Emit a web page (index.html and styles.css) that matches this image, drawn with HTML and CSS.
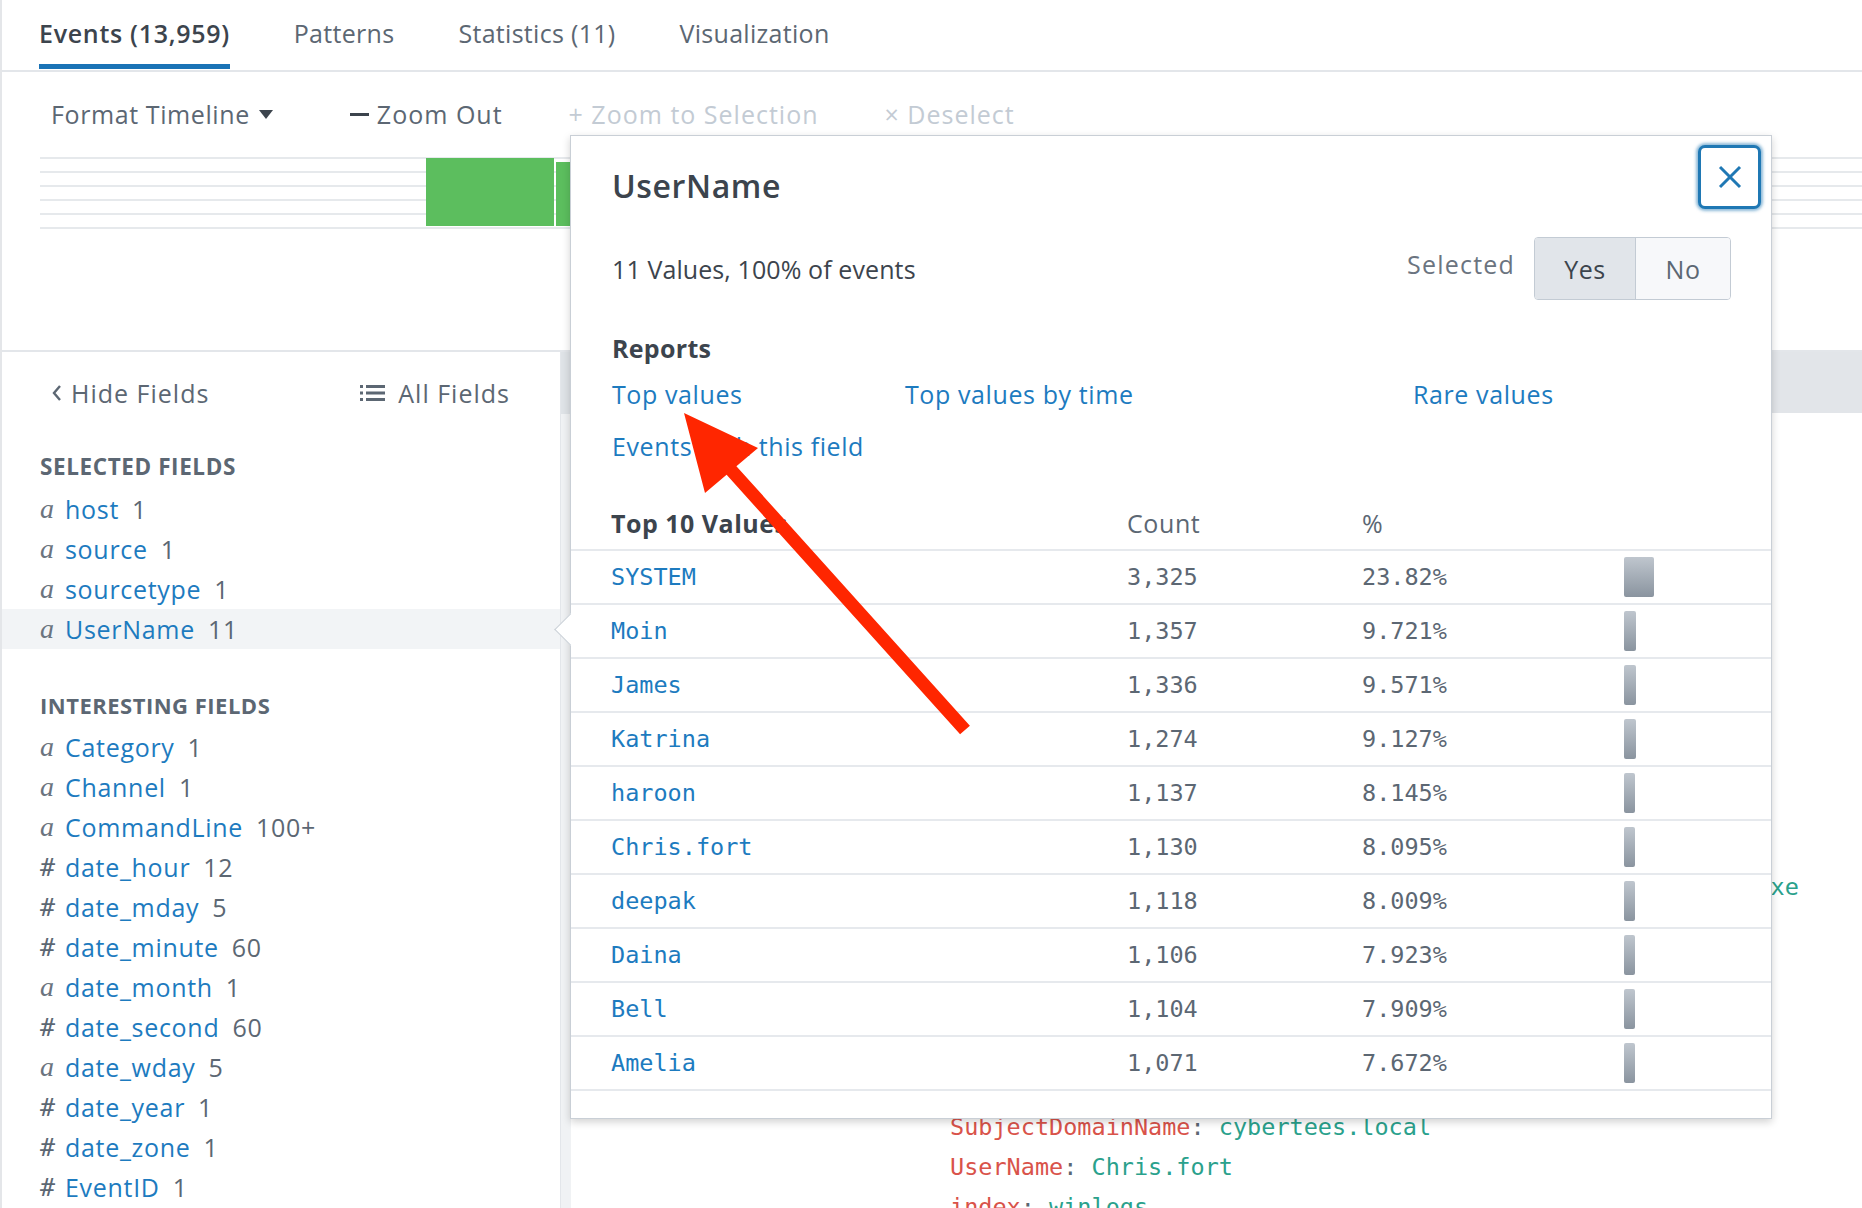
FILE: index.html
```html
<!DOCTYPE html>
<html lang="en">
<head>
<meta charset="utf-8">
<title>Search - Events</title>
<link rel="stylesheet" href="styles.css">
</head>
<body>
<div class="app">
  <nav class="tabs">
    <div class="tab active">Events (13,959)</div>
    <div class="tab">Patterns</div>
    <div class="tab">Statistics (11)</div>
    <div class="tab">Visualization</div>
  </nav>

  <section class="timeline">
    <div class="toolbar">
      <span class="tool first">Format Timeline<span class="caret"></span></span>
      <span class="tool"><span class="dash"></span>Zoom Out</span>
      <span class="tool disabled">+ Zoom to Selection</span>
      <span class="tool disabled">× Deselect</span>
    </div>
    <div class="chart">
      <div class="cbar b1"></div>
      <div class="cbar b2"></div>
    </div>
  </section>

  <div class="main">
    <aside class="sidebar">
      <div class="fields-nav">
        <span class="nav-item"><svg class="chev" width="12" height="18" viewBox="0 0 12 18"><polyline points="9,2 3,9 9,16" fill="none" stroke="#5c6773" stroke-width="2.4"/></svg>Hide Fields</span>
        <span class="nav-item"><svg class="list-ico" width="25" height="18" viewBox="0 0 25 18"><rect x="0" y="1" width="3" height="3" fill="#5c6773"/><rect x="0" y="7.5" width="3" height="3" fill="#5c6773"/><rect x="0" y="14" width="3" height="3" fill="#5c6773"/><rect x="6" y="1" width="19" height="3" fill="#5c6773"/><rect x="6" y="7.5" width="19" height="3" fill="#5c6773"/><rect x="6" y="14" width="19" height="3" fill="#5c6773"/></svg>All Fields</span>
      </div>

      <h3 class="sect-title first">Selected Fields</h3>
      <ul class="field-list">
        <li class="field"><span class="type str">a</span><span class="name">host</span><span class="count">1</span></li>
        <li class="field"><span class="type str">a</span><span class="name">source</span><span class="count">1</span></li>
        <li class="field"><span class="type str">a</span><span class="name">sourcetype</span><span class="count">1</span></li>
        <li class="field current"><span class="type str">a</span><span class="name">UserName</span><span class="count">11</span></li>
      </ul>

      <h3 class="sect-title">Interesting Fields</h3>
      <ul class="field-list">
        <li class="field"><span class="type str">a</span><span class="name">Category</span><span class="count">1</span></li>
        <li class="field"><span class="type str">a</span><span class="name">Channel</span><span class="count">1</span></li>
        <li class="field"><span class="type str">a</span><span class="name">CommandLine</span><span class="count">100+</span></li>
        <li class="field"><span class="type num">#</span><span class="name">date_hour</span><span class="count">12</span></li>
        <li class="field"><span class="type num">#</span><span class="name">date_mday</span><span class="count">5</span></li>
        <li class="field"><span class="type num">#</span><span class="name">date_minute</span><span class="count">60</span></li>
        <li class="field"><span class="type str">a</span><span class="name">date_month</span><span class="count">1</span></li>
        <li class="field"><span class="type num">#</span><span class="name">date_second</span><span class="count">60</span></li>
        <li class="field"><span class="type str">a</span><span class="name">date_wday</span><span class="count">5</span></li>
        <li class="field"><span class="type num">#</span><span class="name">date_year</span><span class="count">1</span></li>
        <li class="field"><span class="type num">#</span><span class="name">date_zone</span><span class="count">1</span></li>
        <li class="field"><span class="type num">#</span><span class="name">EventID</span><span class="count">1</span></li>
      </ul>
    </aside>

    <div class="scroll"><div class="thumb"></div></div>

    <div class="events">
      <div class="events-head"></div>
      <div class="event-lines">
        <div class="ev"><span class="k">EventCode</span>: <span class="v">4688</span></div>
        <div class="ev"><span class="k">EventType</span>: <span class="v">0</span></div>
        <div class="ev"><span class="k">Keywords</span>: <span class="v">Audit Success</span></div>
        <div class="ev"><span class="k">LogName</span>: <span class="v">Security</span></div>
        <div class="ev"><span class="k">Message</span>: <span class="v">A new process has been created.</span></div>
        <div class="ev"><span class="k">ComputerName</span>: <span class="v">WIN-DC01.cybertees.local</span></div>
        <div class="ev"><span class="k">TaskCategory</span>: <span class="v">Process Creation</span></div>
        <div class="ev"><span class="k">OpCode</span>: <span class="v">Info</span></div>
        <div class="ev"><span class="k">RecordNumber</span>: <span class="v">8451232</span></div>
        <div class="ev"><span class="k">SourceName</span>: <span class="v">Microsoft Windows security</span></div>
        <div class="ev"><span class="k">Type</span>: <span class="v">Information</span></div>
        <div class="ev"><span class="k">NewProcessName</span>: <span class="v">C:\Program Files\Windows Defender\NisSrv.exe</span></div>
        <div class="ev"><span class="k">ProcessId</span>: <span class="v">0x1f4</span></div>
        <div class="ev"><span class="k">TokenElevationType</span>: <span class="v">%%1936</span></div>
        <div class="ev"><span class="k">SubjectLogonId</span>: <span class="v">0x3e7</span></div>
        <div class="ev"><span class="k">SubjectUserName</span>: <span class="v">WIN-DC01$</span></div>
        <div class="ev"><span class="k">SubjectUserSid</span>: <span class="v">S-1-5-18</span></div>
        <div class="ev"><span class="k">SubjectDomainName</span>: <span class="v">cybertees.local</span></div>
        <div class="ev"><span class="k">UserName</span>: <span class="v">Chris.fort</span></div>
        <div class="ev"><span class="k">index</span>: <span class="v">winlogs</span></div>
      </div>
    </div>
  </div>

  <div class="popup">
    <div class="pop-head">
      <h2 class="pop-title">UserName</h2>
      <button class="close" aria-label="Close"><svg width="26" height="24" viewBox="0 0 26 24"><line x1="3" y1="2" x2="23" y2="22" stroke="#1f78b4" stroke-width="3"/><line x1="23" y1="2" x2="3" y2="22" stroke="#1f78b4" stroke-width="3"/></svg></button>
    </div>
    <div class="meta">
      <span class="meta-text">11 Values, 100% of events</span>
      <div class="sel">
        <span class="sel-label">Selected</span>
        <div class="toggle"><span class="opt on">Yes</span><span class="opt">No</span></div>
      </div>
    </div>
    <div class="reports-title">Reports</div>
    <div class="reports">
      <a class="link">Top values</a>
      <a class="link">Top values by time</a>
      <a class="link">Rare values</a>
      <a class="link">Events with this field</a>
    </div>
    <div class="vtable">
      <div class="vrow vhead"><span class="h-strong">Top 10 Values</span><span>Count</span><span>%</span><span></span></div>
      <div class="vrow"><span class="val">SYSTEM</span><span class="num">3,325</span><span class="num">23.82%</span><span><i class="vbar" style="width:30px"></i></span></div>
      <div class="vrow"><span class="val">Moin</span><span class="num">1,357</span><span class="num">9.721%</span><span><i class="vbar" style="width:12px"></i></span></div>
      <div class="vrow"><span class="val">James</span><span class="num">1,336</span><span class="num">9.571%</span><span><i class="vbar" style="width:12px"></i></span></div>
      <div class="vrow"><span class="val">Katrina</span><span class="num">1,274</span><span class="num">9.127%</span><span><i class="vbar" style="width:12px"></i></span></div>
      <div class="vrow"><span class="val">haroon</span><span class="num">1,137</span><span class="num">8.145%</span><span><i class="vbar" style="width:11px"></i></span></div>
      <div class="vrow"><span class="val">Chris.fort</span><span class="num">1,130</span><span class="num">8.095%</span><span><i class="vbar" style="width:11px"></i></span></div>
      <div class="vrow"><span class="val">deepak</span><span class="num">1,118</span><span class="num">8.009%</span><span><i class="vbar" style="width:11px"></i></span></div>
      <div class="vrow"><span class="val">Daina</span><span class="num">1,106</span><span class="num">7.923%</span><span><i class="vbar" style="width:11px"></i></span></div>
      <div class="vrow"><span class="val">Bell</span><span class="num">1,104</span><span class="num">7.909%</span><span><i class="vbar" style="width:11px"></i></span></div>
      <div class="vrow"><span class="val">Amelia</span><span class="num">1,071</span><span class="num">7.672%</span><span><i class="vbar" style="width:11px"></i></span></div>
    </div>
  </div>

  <svg class="annot" width="1862" height="1208" viewBox="0 0 1862 1208">
    <polygon points="684,413 758,448 736.4,466.2 969.9,725.7 960.1,734.3 726.6,474.8 705,493" fill="#ff2600"/>
  </svg>
</div>
</body>
</html>
```

FILE: styles.css
```css
* { box-sizing: border-box; }
html, body { margin: 0; padding: 0; background: #fff; }
body {
  font-family: "Open Sans", "Liberation Sans", sans-serif;
  color: #3c444d;
  width: 1862px;
  height: 1208px;
  overflow: hidden;
}
.app {
  position: relative;
  width: 1862px;
  height: 1208px;
  border-left: 2px solid #e4e6e9;
  overflow: hidden;
}

/* tabs */
.tabs {
  display: flex;
  gap: 64px;
  height: 72px;
  padding-left: 37px;
  border-bottom: 2px solid #e3e6ea;
}
.tab {
  height: 69px;
  padding-top: 14px;
  font-size: 25px;
  letter-spacing: 0.3px;
  color: #5c6773;
  border-bottom: 5px solid transparent;
  line-height: 38px;
  white-space: nowrap;
}
.tab.active { color: #3c444d; border-bottom-color: #1a73b6; font-weight: 600; letter-spacing: 0.7px; }

/* timeline */
.timeline {
  height: 280px;
  padding: 22px 0 0 38px;
  border-bottom: 2px solid #e3e6ea;
}
.toolbar {
  display: flex;
  align-items: center;
  height: 40px;
  padding-left: 11px;
  gap: 66px;
  font-size: 25px;
  letter-spacing: 1px;
  color: #5c6773;
}
.tool { display: inline-flex; align-items: center; white-space: nowrap; }
.tool.first { letter-spacing: 0.6px; margin-right: 11px; }
.tool.disabled { color: #c3cbd4; }
.caret {
  display: inline-block;
  width: 0; height: 0;
  margin-left: 9px;
  border-left: 7px solid transparent;
  border-right: 7px solid transparent;
  border-top: 9px solid #3c444d;
}
.dash {
  display: inline-block;
  width: 19px; height: 3px;
  background: #3c444d;
  margin-right: 8px;
}
.chart {
  height: 72px;
  margin-top: 23px;
  display: flex;
  align-items: flex-end;
  gap: 2px;
  padding-bottom: 3px;
  background: repeating-linear-gradient(to bottom, #e6e9ec 0, #e6e9ec 2px, transparent 2px, transparent 14px);
}
.cbar { background: #5cbe5e; }
.b1 { width: 128px; height: 68px; margin-left: 386px; }
.b2 { width: 200px; height: 64px; }

/* main */
.main {
  display: flex;
  height: 856px;
}
.sidebar {
  width: 558px;
  flex: none;
  padding: 21px 0 0 38px;
}
.fields-nav {
  display: flex;
  justify-content: space-between;
  align-items: center;
  height: 40px;
  padding: 0 50px 0 11px;
  font-size: 25px;
  letter-spacing: 1px;
  color: #5c6773;
}
.nav-item { display: inline-flex; align-items: center; }
.chev { margin-right: 8px; }
.list-ico { margin-right: 13px; }

.sect-title {
  margin: 41px 0 7px;
  height: 30px;
  line-height: 30px;
  font-size: 22px;
  font-weight: 700;
  text-transform: uppercase;
  letter-spacing: 0.5px;
  color: #5c6773;
}
.sect-title.first { margin-top: 39px; font-size: 22.5px; letter-spacing: 0.6px; }
.field-list { list-style: none; margin: 0; padding: 0; }
.field {
  display: flex;
  align-items: center;
  height: 40px;
  font-size: 25px;
  letter-spacing: 0.7px;
  white-space: nowrap;
}
.field.current {
  margin-left: -38px;
  padding-left: 38px;
  background: #f2f4f6;
}
.type { width: 25px; color: #6b7480; flex: none; }
.type.str { font-family: "Liberation Serif", "DejaVu Serif", serif; font-style: italic; font-size: 28px; }
.type.num { font-size: 25px; }
.name { color: #1d7bbf; }
.count { color: #5c6773; margin-left: 13px; }

.scroll {
  width: 11px;
  flex: none;
  background: #f0f2f4;
  border-left: 1px solid #e3e6ea;
}
.thumb { height: 62px; background: #dfe3e7; }

.events { flex: 1; min-width: 0; }
.events-head { height: 61px; background: #e2e5e9; }
.event-lines {
  padding: 14px 0 0 379px;
  font-family: "DejaVu Sans Mono", "Liberation Mono", monospace;
  font-size: 23.5px;
  color: #5c6773;
  white-space: nowrap;
}
.ev { height: 40px; line-height: 40px; }
.ev .k { color: #d9534a; }
.ev .v { color: #2aa18c; }

/* popup */
.popup {
  position: absolute;
  left: 568px;
  top: 135px;
  width: 1202px;
  height: 984px;
  background: #fff;
  border: 1px solid #c9cfd6;
  box-shadow: 0 3px 8px rgba(0, 0, 0, 0.18);
  z-index: 5;
}
.popup::before {
  content: "";
  position: absolute;
  left: -12px;
  top: 482px;
  width: 22px;
  height: 22px;
  background: #fff;
  border-left: 1px solid #c9cfd6;
  border-bottom: 1px solid #c9cfd6;
  transform: rotate(45deg);
}
.pop-head {
  display: flex;
  justify-content: space-between;
  align-items: flex-start;
  padding: 9px 10px 0 41px;
  height: 73px;
}
.pop-title {
  margin: 24px 0 0;
  font-size: 32px;
  line-height: 34px;
  font-weight: 600;
  letter-spacing: 0.6px;
  color: #3c444d;
}
.close {
  width: 63px;
  height: 64px;
  padding: 0;
  display: flex;
  align-items: center;
  justify-content: center;
  background: #fff;
  border: 3px solid #1f78b4;
  border-radius: 7px;
  box-shadow: 0 0 3px 2px rgba(31, 120, 180, 0.5);
}
.meta {
  display: flex;
  justify-content: space-between;
  align-items: center;
  margin-top: 28px;
  padding: 0 40px 0 41px;
  height: 63px;
  font-size: 25px;
  letter-spacing: 0.5px;
}
.meta-text { letter-spacing: 0.1px; }
.sel { display: flex; align-items: center; gap: 19px; }
.sel-label { color: #6b7480; margin-bottom: 10px; letter-spacing: 1.2px; }
.toggle {
  display: flex;
  height: 63px;
  border: 1px solid #c3cbd4;
  border-radius: 4px;
  overflow: hidden;
}
.opt {
  display: flex;
  align-items: center;
  justify-content: center;
  width: 94px;
  background: #f7f8fa;
  color: #5c6773;
}
.opt.on { width: 101px; background: #e1e5ea; color: #3c444d; border-right: 1px solid #c3cbd4; }

.reports-title {
  margin-top: 31px;
  padding-left: 41px;
  font-size: 25px;
  line-height: 34px;
  font-weight: 700;
  letter-spacing: 0.3px;
  color: #3c444d;
}
.reports {
  display: grid;
  grid-template-columns: 293px 508px auto;
  grid-auto-rows: 52px;
  margin-top: 3px;
  padding-left: 41px;
  font-size: 25px;
  letter-spacing: 0.6px;
}
.link { color: #1d7bbf; line-height: 52px; white-space: nowrap; }

.vtable { margin-top: 24px; }
.vrow {
  display: grid;
  grid-template-columns: 516px 235px 262px 1fr;
  align-items: center;
  height: 54px;
  padding-left: 40px;
  border-bottom: 2px solid #e6e9ed;
}
.vhead {
  height: 55px;
  font-size: 25px;
  letter-spacing: 0.6px;
  color: #5c6773;
}
.h-strong { font-weight: 700; color: #3c444d; letter-spacing: 0.5px; }
.val {
  font-family: "DejaVu Sans Mono", "Liberation Mono", monospace;
  font-size: 23.5px;
  color: #1d7bbf;
}
.num {
  font-family: "DejaVu Sans Mono", "Liberation Mono", monospace;
  font-size: 23.5px;
  color: #5c6773;
}
.vbar {
  display: block;
  height: 40px;
  border-radius: 2px;
  background: linear-gradient(to bottom, #bfc6ce, #8a949f);
}

.annot {
  position: absolute;
  left: -2px;
  top: 0;
  z-index: 10;
  pointer-events: none;
}
```
